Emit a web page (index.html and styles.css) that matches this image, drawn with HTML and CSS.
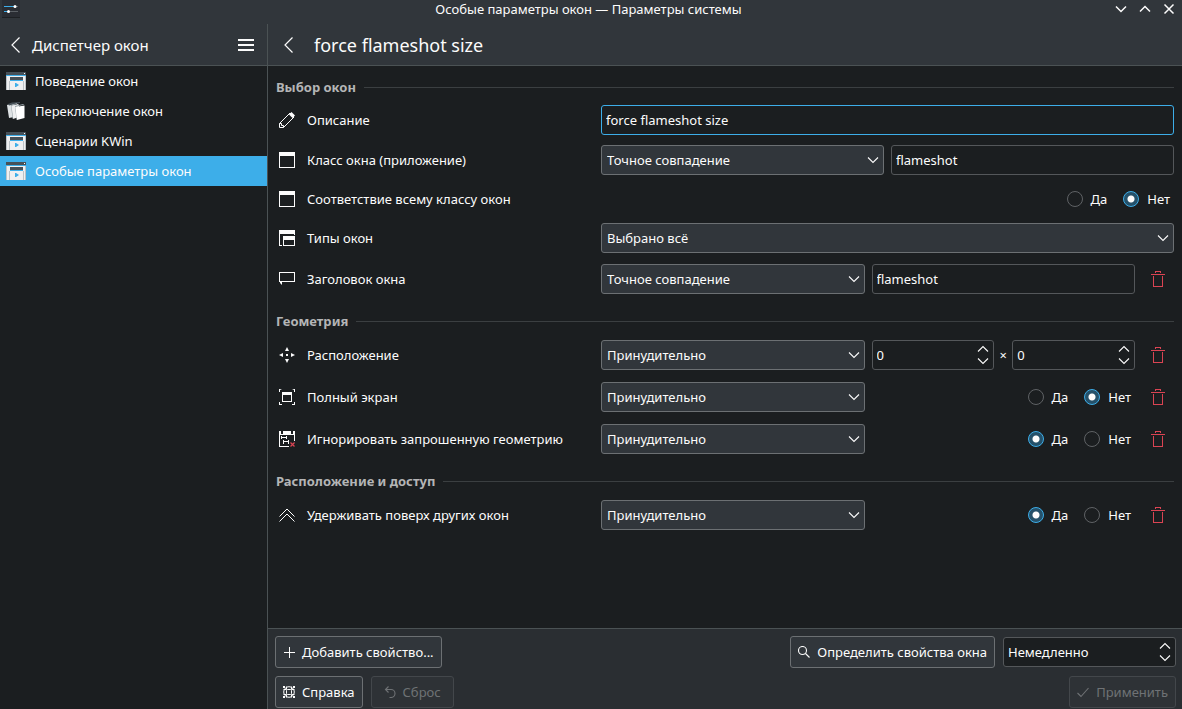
FILE: index.html
```html
<!DOCTYPE html>
<html lang="ru">
<head>
<meta charset="utf-8">
<meta name="viewport" content="width=device-width, initial-scale=1">
<title>Особые параметры окон — Параметры системы</title>
<link rel="stylesheet" href="styles.css">
</head>
<body>
<svg class="defs" aria-hidden="true">
  <symbol id="i-back" viewBox="0 0 16 16"><path class="s back" d="M11.500.5 4 8l7.500 7.500"/></symbol>
  <symbol id="i-down" viewBox="0 0 12 8"><path class="s chev" d="M1 1.500l5 5 5-5"/></symbol>
  <symbol id="i-up" viewBox="0 0 12 8"><path class="s chev" d="M1 6.500l5-5 5 5"/></symbol>
  <symbol id="i-trash" viewBox="0 0 16 16"><path d="M5 0h6v2h-1V1H6v1H5zM1 3h14v1H1zM3 5h1v10h8V5h1v11H3z"/></symbol>
  <symbol id="i-window" viewBox="0 0 16 16"><path fill-rule="evenodd" d="M0 0h16v16H0zM1 4v11h14V4z"/></symbol>
  <symbol id="i-types" viewBox="0 0 16 16"><path fill-rule="evenodd" d="M0 0h16v5h-1V4H1v11h2v1H0zM4 6h12v10H4zM5 10v5h10v-5z"/></symbol>
  <symbol id="i-caption" viewBox="0 0 16 16"><path fill-rule="evenodd" d="M0 1h16v10H3v3L1 12v-1H0zM1 2v8h14V2z"/></symbol>
  <symbol id="i-pencil" viewBox="0 0 16 16"><path class="s" d="M.5 15.500v-4L11 1l4 4L4.500 15.500zM.5 11.500h2v2h2v2"/><path d="M10 2.500 12.500 0 16 3.500 13.500 6z"/></symbol>
  <symbol id="i-move" viewBox="0 0 16 16"><path d="M7 7h2v2H7zM8 0l2 4H6zM8 16l2-4H6zM0 8l4-2v4zM16 8l-4-2v4z"/></symbol>
  <symbol id="i-full" viewBox="0 0 16 16"><path fill-rule="evenodd" d="M0 0h3L1 1v2H0zM16 0h-3l2 1v2h1zM0 16h3v-1H1v-2H0zM16 16h-3v-1h2v-2h1zM3 3h10v10H3zM4 6v6h8V6z"/></symbol>
  <symbol id="i-ignore" viewBox="0 0 16 16"><path d="M0 0h2v3h2V0h8v3h2V0h2v10h-1V4H1v11h9v1H0zM2 5h1v1h4V5h1v3H7V7H3v1H2zM4 9h1v1h4V9h1v4H9v-2H5v2H4z"/><path class="danger" d="M11.500 11.500l4 4M15.500 11.500l-4 4"/></symbol>
  <symbol id="i-above" viewBox="0 0 16 16"><path class="s" d="M.5 9.500 8 2l7.500 7.500M.5 14.500 8 7l7.500 7.500"/></symbol>
  <symbol id="i-kwin" viewBox="0 0 20 18">
    <path fill="#eff0f1" d="M0 3h20v15H0z"/><path fill="#475057" d="M0 0h20v3H0z"/><path fill="#3daee9" d="M0 3h20v1H0z"/><path fill="#fff" d="M18 1h1v1h-1z"/>
    <path fill="#bdc3c7" d="M0 4h1v14H0zM19 4h1v14h-1zM3 9h1v9H3zM17 9h1v9h-1z"/><path fill="#475057" d="M4 5h13v3H4z"/><path fill="#3daee9" d="M4 8h13v1H4zM9 11h1l3 2-3 2H9z"/>
  </symbol>
  <symbol id="i-switch" viewBox="0 0 20 18">
    <path fill="#dfe3e5" d="M1 3l6-2 1 1v13l-5 1z"/><path fill="#475057" d="M2 2l4-1.500 8-.5v1L3 3.500z"/>
    <path fill="#eff0f1" d="M5 4l7-2 1 1v12l-6 2z"/><path fill="#95a0a5" d="M5 4h.5l1.700 12.500-.5.500zM9 4h.5L11 18h-.5zM5 3l6-2v1L5 4zM9 4l8-2 1.500.5L9.500 5z"/>
    <path fill="#fff" d="M9.500 5 18.500 3.500V16L11 18z"/>
  </symbol>
</svg>

<div class="window">
  <header class="titlebar">
    <svg class="app-icon" viewBox="0 0 18 18" aria-hidden="true"><path fill="#2a2d33" d="M0 0h18v18H0z"/><path fill="#1d2023" d="M0 17h18v1H0z"/><path fill="#3daee9" d="M2 6h11v1H2zM2 11h4v1H2z"/><path fill="#5b6065" d="M14 6h2v1h-2zM8 11h8v1H8z"/><circle cx="13" cy="6.500" r="1.500" fill="#fff"/><circle cx="6.500" cy="11.500" r="1.500" fill="#fff"/></svg>
    <span class="title">Особые параметры окон — Параметры системы</span>
    <div class="window-buttons">
      <button aria-label="Свернуть"><svg viewBox="0 0 12 12"><path class="s bold" d="M1 3.500l5 5 5-5"/></svg></button>
      <button aria-label="Распахнуть"><svg viewBox="0 0 12 12"><path class="s bold" d="M1 8.500l5-5 5 5"/></svg></button>
      <button aria-label="Закрыть"><svg viewBox="0 0 12 12"><path class="s bold" d="M1.500 1.500l9 9M10.500 1.500l-9 9"/></svg></button>
    </div>
  </header>

  <div class="columns">
    <aside class="sidebar">
      <div class="head side-head">
        <button class="bare" aria-label="Назад"><svg class="icon"><use href="#i-back"/></svg></button>
        <h2>Диспетчер окон</h2>
        <button class="bare" aria-label="Меню"><svg class="icon" viewBox="0 0 16 16"><path d="M0 2h16v2H0zM0 7h16v2H0zM0 12h16v2H0z"/></svg></button>
      </div>
      <nav>
        <a href="#"><svg class="nav-icon"><use href="#i-kwin"/></svg>Поведение окон</a>
        <a href="#"><svg class="nav-icon"><use href="#i-switch"/></svg>Переключение окон</a>
        <a href="#"><svg class="nav-icon"><use href="#i-kwin"/></svg>Сценарии KWin</a>
        <a href="#" class="current" aria-current="page"><svg class="nav-icon"><use href="#i-kwin"/></svg>Особые параметры окон</a>
      </nav>
    </aside>

    <main class="page">
      <div class="head page-head">
        <button class="bare" aria-label="Назад"><svg class="icon"><use href="#i-back"/></svg></button>
        <h1>force flameshot size</h1>
      </div>

      <form class="rules" id="rules">
        <h3>Выбор окон</h3>
        <div class="row">
          <label class="name" for="desc"><svg class="icon"><use href="#i-pencil"/></svg>Описание</label>
          <div class="value"><input class="text focused" id="desc" type="text" value="force flameshot size"></div>
        </div>
        <div class="row">
          <label class="name" for="cls"><svg class="icon"><use href="#i-window"/></svg>Класс окна (приложение)</label>
          <div class="value halves">
            <div class="combo"><select id="cls"><option>Точное совпадение</option></select><svg class="chevron"><use href="#i-down"/></svg></div>
            <input class="text" type="text" value="flameshot" aria-label="Класс окна">
          </div>
        </div>
        <div class="row short">
          <span class="name"><svg class="icon"><use href="#i-window"/></svg>Соответствие всему классу окон</span>
          <div class="value radios">
            <label><input type="radio" name="whole">Да</label>
            <label><input type="radio" name="whole" checked>Нет</label>
          </div>
        </div>
        <div class="row">
          <label class="name" for="types"><svg class="icon"><use href="#i-types"/></svg>Типы окон</label>
          <div class="value"><div class="combo"><select id="types"><option>Выбрано всё</option></select><svg class="chevron"><use href="#i-down"/></svg></div></div>
        </div>
        <div class="row removable">
          <label class="name" for="ttl"><svg class="icon"><use href="#i-caption"/></svg>Заголовок окна</label>
          <div class="value halves">
            <div class="combo"><select id="ttl"><option>Точное совпадение</option></select><svg class="chevron"><use href="#i-down"/></svg></div>
            <input class="text" type="text" value="flameshot" aria-label="Заголовок окна">
          </div>
          <button type="button" class="remove" aria-label="Удалить"><svg class="icon"><use href="#i-trash"/></svg></button>
        </div>

        <h3>Геометрия</h3>
        <div class="row removable">
          <label class="name" for="pos"><svg class="icon"><use href="#i-move"/></svg>Расположение</label>
          <div class="value halves">
            <div class="combo"><select id="pos"><option>Принудительно</option></select><svg class="chevron"><use href="#i-down"/></svg></div>
            <div class="pair">
              <div class="spin"><input class="text" type="number" value="0" aria-label="X"><div class="steps"><button type="button" aria-label="Больше"><svg class="chevron"><use href="#i-up"/></svg></button><button type="button" aria-label="Меньше"><svg class="chevron"><use href="#i-down"/></svg></button></div></div>
              <span class="times">×</span>
              <div class="spin"><input class="text" type="number" value="0" aria-label="Y"><div class="steps"><button type="button" aria-label="Больше"><svg class="chevron"><use href="#i-up"/></svg></button><button type="button" aria-label="Меньше"><svg class="chevron"><use href="#i-down"/></svg></button></div></div>
            </div>
          </div>
          <button type="button" class="remove" aria-label="Удалить"><svg class="icon"><use href="#i-trash"/></svg></button>
        </div>
        <div class="row removable">
          <label class="name" for="fs"><svg class="icon"><use href="#i-full"/></svg>Полный экран</label>
          <div class="value halves">
            <div class="combo"><select id="fs"><option>Принудительно</option></select><svg class="chevron"><use href="#i-down"/></svg></div>
            <div class="radios">
              <label><input type="radio" name="full">Да</label>
              <label><input type="radio" name="full" checked>Нет</label>
            </div>
          </div>
          <button type="button" class="remove" aria-label="Удалить"><svg class="icon"><use href="#i-trash"/></svg></button>
        </div>
        <div class="row removable">
          <label class="name" for="ign"><svg class="icon"><use href="#i-ignore"/></svg>Игнорировать запрошенную геометрию</label>
          <div class="value halves">
            <div class="combo"><select id="ign"><option>Принудительно</option></select><svg class="chevron"><use href="#i-down"/></svg></div>
            <div class="radios">
              <label><input type="radio" name="ignore" checked>Да</label>
              <label><input type="radio" name="ignore">Нет</label>
            </div>
          </div>
          <button type="button" class="remove" aria-label="Удалить"><svg class="icon"><use href="#i-trash"/></svg></button>
        </div>

        <h3>Расположение и доступ</h3>
        <div class="row removable">
          <label class="name" for="abv"><svg class="icon"><use href="#i-above"/></svg>Удерживать поверх других окон</label>
          <div class="value halves">
            <div class="combo"><select id="abv"><option>Принудительно</option></select><svg class="chevron"><use href="#i-down"/></svg></div>
            <div class="radios">
              <label><input type="radio" name="above" checked>Да</label>
              <label><input type="radio" name="above">Нет</label>
            </div>
          </div>
          <button type="button" class="remove" aria-label="Удалить"><svg class="icon"><use href="#i-trash"/></svg></button>
        </div>
      </form>

      <footer class="footer">
        <div class="bar">
          <button class="btn"><svg class="btn-icon" viewBox="0 0 12 12"><path class="s" d="M6.500 1v11M1 6.500h11"/></svg>Добавить свойство...</button>
          <span class="grow"></span>
          <button class="btn"><svg class="btn-icon" viewBox="0 0 12 12"><circle class="s chev" cx="4.500" cy="4.500" r="4"/><path class="s chev" d="M7.500 7.500l4 4"/></svg>Определить свойства окна</button>
          <div class="spin delay"><input class="text" type="text" value="Немедленно" aria-label="Задержка"><div class="steps"><button type="button" aria-label="Больше"><svg class="chevron"><use href="#i-up"/></svg></button><button type="button" aria-label="Меньше"><svg class="chevron"><use href="#i-down"/></svg></button></div></div>
        </div>
        <div class="bar">
          <button class="btn"><svg class="btn-icon" viewBox="0 0 12 12"><circle class="s" cx="6" cy="6" r="5.300"/><rect class="s" x="3.500" y="3.500" width="5" height="5" rx="1"/><path class="s" d="M3.500.5v3M8.500.5v3M3.500 8.500v3M8.500 8.500v3M.5 3.500h3M8.500 3.500h3M.5 8.500h3M8.500 8.500h3"/><path d="M0 0h2v2H0zM10 0h2v2h-2zM0 10h2v2H0zM10 10h2v2h-2z"/></svg>Справка</button>
          <button class="btn wide" disabled><svg class="btn-icon" viewBox="0 0 12 12"><path class="s chev" d="M4.500.5l-3 3 3 3M1.500 3.500H7a4 4 0 0 1 0 8H5.500"/></svg>Сброс</button>
          <span class="grow"></span>
          <button class="btn" disabled><svg class="btn-icon" viewBox="0 0 12 12"><path class="s chev" d="M.5 7l3.500 3.500L11.500 2"/></svg>Применить</button>
        </div>
      </footer>
    </main>
  </div>
</div>
</body>
</html>
```
FILE: styles.css
```css
:root {
  --view: #1b1e20;
  --window: #2a2e32;
  --header: #31363b;
  --line: #4b5254;
  --field-line: #54575a;
  --button-line: #6c7073;
  --text: #fcfcfc;
  --accent: #3daee9;
  --danger: #da4453;
}

* { box-sizing: border-box; }

body {
  margin: 0;
  background: var(--view);
  color: var(--text);
  font: 13px/20px "Noto Sans", sans-serif;
}

button, input, select { font: inherit; color: inherit; margin: 0; }
button { background: none; border: 0; padding: 0; }
h1, h2, h3 { margin: 0; font-weight: 400; }
svg { display: block; flex: none; fill: currentColor; }
.defs { position: absolute; width: 0; height: 0; }
.s { fill: none; stroke: currentColor; }
.chev { stroke-width: 1.1; }
.back { stroke-width: 1.2; }
.bold { stroke-width: 1.5; }
.danger { fill: none; stroke: var(--danger); stroke-width: 1.25; }
.icon { width: 16px; height: 16px; }
.chevron { width: 12px; height: 8px; }
.grow { flex: 1; }

.window { display: flex; flex-direction: column; min-height: 100vh; }

.titlebar {
  display: grid;
  grid-template-columns: 1fr auto 1fr;
  align-items: start;
  height: 24px;
  padding: 0 7px 0 2px;
  background: var(--header);
}
.title { line-height: 18px; }
.app-icon { width: 18px; height: 18px; }
.window-buttons { display: flex; justify-content: flex-end; gap: 12px; padding-top: 3px; }
.window-buttons svg { width: 12px; height: 12px; }

.columns { flex: 1; display: grid; grid-template-columns: 268px minmax(0, 1fr); }
.sidebar { border-right: 1px solid var(--line); }
.head {
  display: flex;
  align-items: center;
  height: 42px;
  background: var(--header);
  border-bottom: 1px solid var(--line);
}
.side-head { gap: 8px; padding: 0 13px 0 8px; }
.side-head h2 { flex: 1; font-size: 15px; }
.page-head { gap: 17px; padding: 0 13px; }
.page-head h1 { font-size: 18px; }

nav a {
  display: flex;
  align-items: center;
  gap: 9px;
  height: 30px;
  padding: 0 6px;
  color: inherit;
  text-decoration: none;
}
nav .current { background: var(--accent); }
.nav-icon { width: 20px; height: 18px; }

.page { display: flex; flex-direction: column; }
.rules { flex: 1; display: flex; flex-direction: column; gap: 6px; padding: 3px 8px; }
.rules h3 {
  display: flex;
  align-items: center;
  gap: 8px;
  margin-top: 8px;
  font-size: 13px;
  line-height: 20px;
  font-weight: 700;
  color: #b4b5b6;
}
.rules h3::after { content: ""; flex: 1; height: 1px; background: #3b3f41; }

.row { display: grid; grid-template-columns: 325fr 573fr; align-items: center; height: 34px; }
.row.short { height: 32px; }
.row.removable { grid-template-columns: 325fr 534fr 39px; height: 36px; }
.name { display: flex; align-items: center; gap: 12px; padding-left: 3px; }
.halves { display: grid; grid-template-columns: 1fr 1fr; align-items: center; gap: 7px; }
.pair { display: grid; grid-template-columns: 1fr 18px 1fr; align-items: center; }
.times { text-align: center; }
.radios { display: flex; justify-content: flex-end; gap: 16px; padding-right: 4px; }
.radios label { display: flex; align-items: center; gap: 8px; }
.remove { justify-self: end; padding: 8px; color: var(--danger); }

.text, select {
  width: 100%;
  height: 30px;
  min-width: 0;
  padding: 0 5px;
  border: 1px solid var(--field-line);
  border-radius: 3px;
  background: var(--view);
  outline: 0;
  appearance: none;
}
.text { padding: 0 4px; }
.text.focused { border-color: var(--accent); }
select { background: var(--header); border-color: var(--button-line); }
.text[type="number"] { appearance: textfield; }
.text::-webkit-inner-spin-button { appearance: none; margin: 0; }

.combo, .spin { display: grid; align-items: center; }
.combo > *, .spin > * { grid-area: 1 / 1; }
.combo .chevron { justify-self: end; margin-right: 5px; pointer-events: none; }
.steps { justify-self: end; display: grid; gap: 4px; margin-right: 5px; }

input[type="radio"] {
  width: 16px;
  height: 16px;
  border: 1px solid #5f6265;
  border-radius: 50%;
  appearance: none;
}
input[type="radio"]:checked {
  border-color: var(--accent);
  background: radial-gradient(circle, #fcfcfc 3px, #25516a 4px);
}

.footer {
  display: flex;
  flex-direction: column;
  gap: 8px;
  padding: 7px 6px 1px 7px;
  background: var(--window);
  border-top: 1px solid var(--line);
}
.bar { display: flex; align-items: center; gap: 8px; }
.btn {
  display: flex;
  align-items: center;
  gap: 7px;
  height: 32px;
  padding: 0 7px;
  border: 1px solid var(--button-line);
  border-radius: 3px;
  background: var(--header);
}
.btn.wide { padding: 0 12px; }
.btn:disabled { background: #2e3236; border-color: #43474b; color: #6f7275; }
.btn-icon { width: 12px; height: 12px; }
.delay { width: 173px; }
```
